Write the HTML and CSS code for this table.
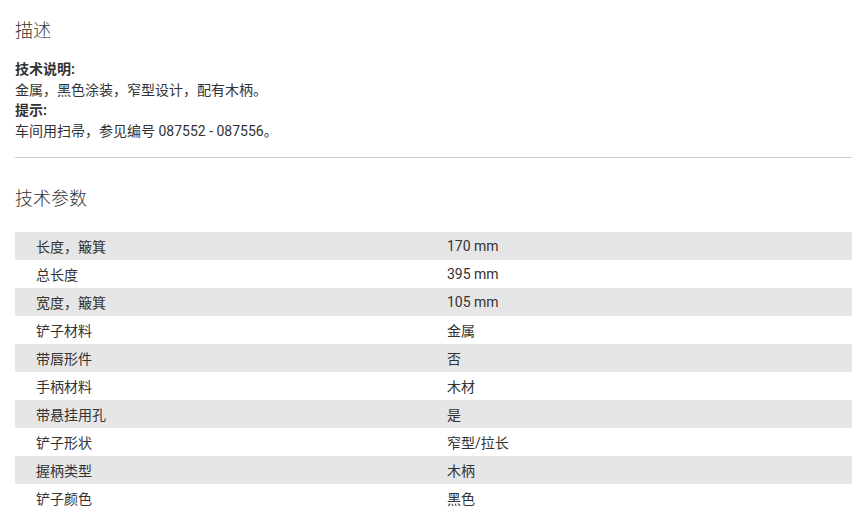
FILE: index.html
```html
<!DOCTYPE html>
<html lang="zh">
<head>
<meta charset="utf-8">
<link rel="stylesheet" href="styles.css">
</head>
<body>
<div class="page">
  <section class="desc">
    <h2 class="title">描述</h2>
    <div class="desc-body">
      <p class="label">技术说明:</p>
      <p>金属，黑色涂装，窄型设计，配有木柄。</p>
      <p class="label">提示:</p>
      <p>车间用扫帚，参见编号 087552 - 087556。</p>
    </div>
  </section>
  <section class="specs">
    <h2 class="title">技术参数</h2>
    <div class="table">
      <div class="row"><span class="k">长度，簸箕</span><span class="v">170 mm</span></div>
      <div class="row"><span class="k">总长度</span><span class="v">395 mm</span></div>
      <div class="row"><span class="k">宽度，簸箕</span><span class="v">105 mm</span></div>
      <div class="row"><span class="k">铲子材料</span><span class="v">金属</span></div>
      <div class="row"><span class="k">带唇形件</span><span class="v">否</span></div>
      <div class="row"><span class="k">手柄材料</span><span class="v">木材</span></div>
      <div class="row"><span class="k">带悬挂用孔</span><span class="v">是</span></div>
      <div class="row"><span class="k">铲子形状</span><span class="v">窄型/拉长</span></div>
      <div class="row"><span class="k">握柄类型</span><span class="v">木柄</span></div>
      <div class="row"><span class="k">铲子颜色</span><span class="v">黑色</span></div>
    </div>
  </section>
</div>
</body>
</html>
```

FILE: styles.css
```css
html, body {
  margin: 0;
  padding: 0;
  background: #fff;
}
body {
  font-family: Roboto, "Noto Sans CJK SC", sans-serif;
  font-size: 14px;
  color: #333;
}
.page {
  padding: 0 1px 0 15px;
}
.title {
  font-size: 18px;
  font-weight: 300;
  line-height: 24px;
  margin: 0;
  color: #333;
}
.desc {
  padding-top: 19px;
  padding-bottom: 15px;
  border-bottom: 1px solid #ccc;
}
.desc-body {
  margin-top: 16px;
  line-height: 20.7px;
}
.desc-body p {
  margin: 0;
}
.desc-body .label {
  font-weight: 700;
}
.specs {
  padding-top: 29px;
}
.table {
  margin-top: 21px;
}
.row {
  display: flex;
  height: 28px;
  align-items: center;
}
.row:nth-child(odd) {
  background: #e6e6e6;
}
.k {
  width: 411px;
  padding-left: 21px;
}
.v {
  flex: 1;
}
```
